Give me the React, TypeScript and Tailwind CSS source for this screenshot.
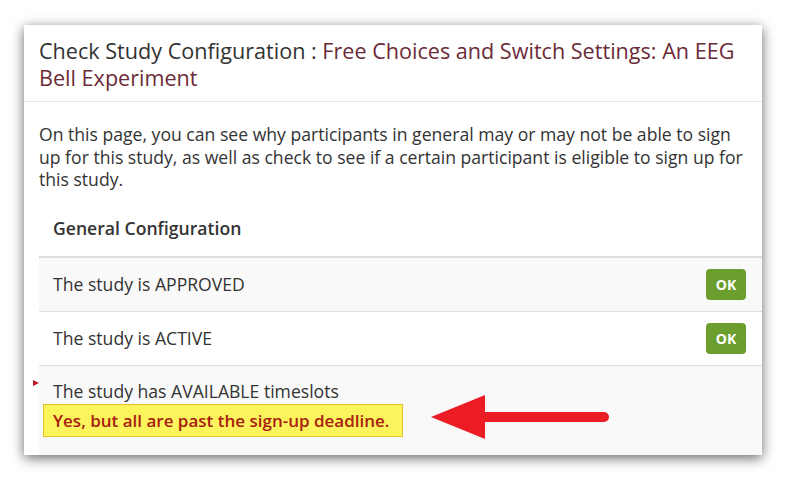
export default function App() {
  return (
    <div className="w-[787px] h-[481px] bg-white pl-[24px] pt-[25px] font-['Open_Sans',sans-serif]">
      <div className="relative w-[738px] h-[430px] overflow-hidden bg-white shadow-[0_3px_12px_rgba(0,0,0,0.6)]">
        <div className="border-b border-[#e5e5e5] pl-[15px] pr-[4px] pt-[12px] pb-[10px] text-[21.6px] leading-[27px] text-[#333]">
          Check Study Configuration : <span className="text-[#6b2b37]">Free Choices and Switch Settings: An EEG Bell Experiment</span>
        </div>
        <p className="px-[15px] pt-[21px] text-[17.6px] leading-[22.5px] text-[#333]">
          On this page, you can see why participants in general may or may not be able to sign up for this study, as well as check to see if a certain participant is eligible to sign up for this study.
        </p>
        <div className="ml-[15px] mt-[9px] text-[17.6px] text-[#333]">
          <div className="flex h-[58px] items-center border-b-2 border-[#ddd] px-[14px] pt-[2px] font-semibold">
            General Configuration
          </div>
          <Row label="The study is APPROVED" striped />
          <Row label="The study is ACTIVE" />
          <div className="h-[120px] bg-[#f9f9f9] px-[4px] pt-[14px]">
            <div className="pl-[10px] leading-[22.5px]">The study has AVAILABLE timeslots</div>
            <div className="mt-[2px] inline-block border border-[#e6c02a] bg-[#fbf45c] pl-[9px] pr-[12px] text-[17px] leading-[31px] font-semibold text-[#a8200f]">
              Yes, but all are past the sign-up deadline.
            </div>
          </div>
        </div>
        {/* annotation marks */}
        <svg className="absolute left-[9px] top-[355px]" width="6" height="6" viewBox="0 0 6 6">
          <path d="M0 0 L6 3 L0 6 Z" fill="#c0192a" />
        </svg>
        <svg className="absolute left-[407px] top-[369px]" width="178" height="46" viewBox="0 0 178 46">
          <path d="M0 23 L54 1 L54 45 Z" fill="#ec1c24" />
          <line x1="52" y1="23" x2="173" y2="23" stroke="#ec1c24" strokeWidth="10" strokeLinecap="round" />
        </svg>
      </div>
    </div>
  );
}

function Row({ label, striped }: { label: string; striped?: boolean }) {
  return (
    <div className={`flex h-[54px] items-center justify-between border-b border-[#ddd] pl-[14px] pr-[16px] ${striped ? "bg-[#f9f9f9]" : "bg-white"}`}>
      <span>{label}</span>
      <span className="flex h-[31px] w-[40px] items-center justify-center rounded-[4px] bg-[#6b9e2d] text-[14px] font-bold text-white">
        OK
      </span>
    </div>
  );
}
